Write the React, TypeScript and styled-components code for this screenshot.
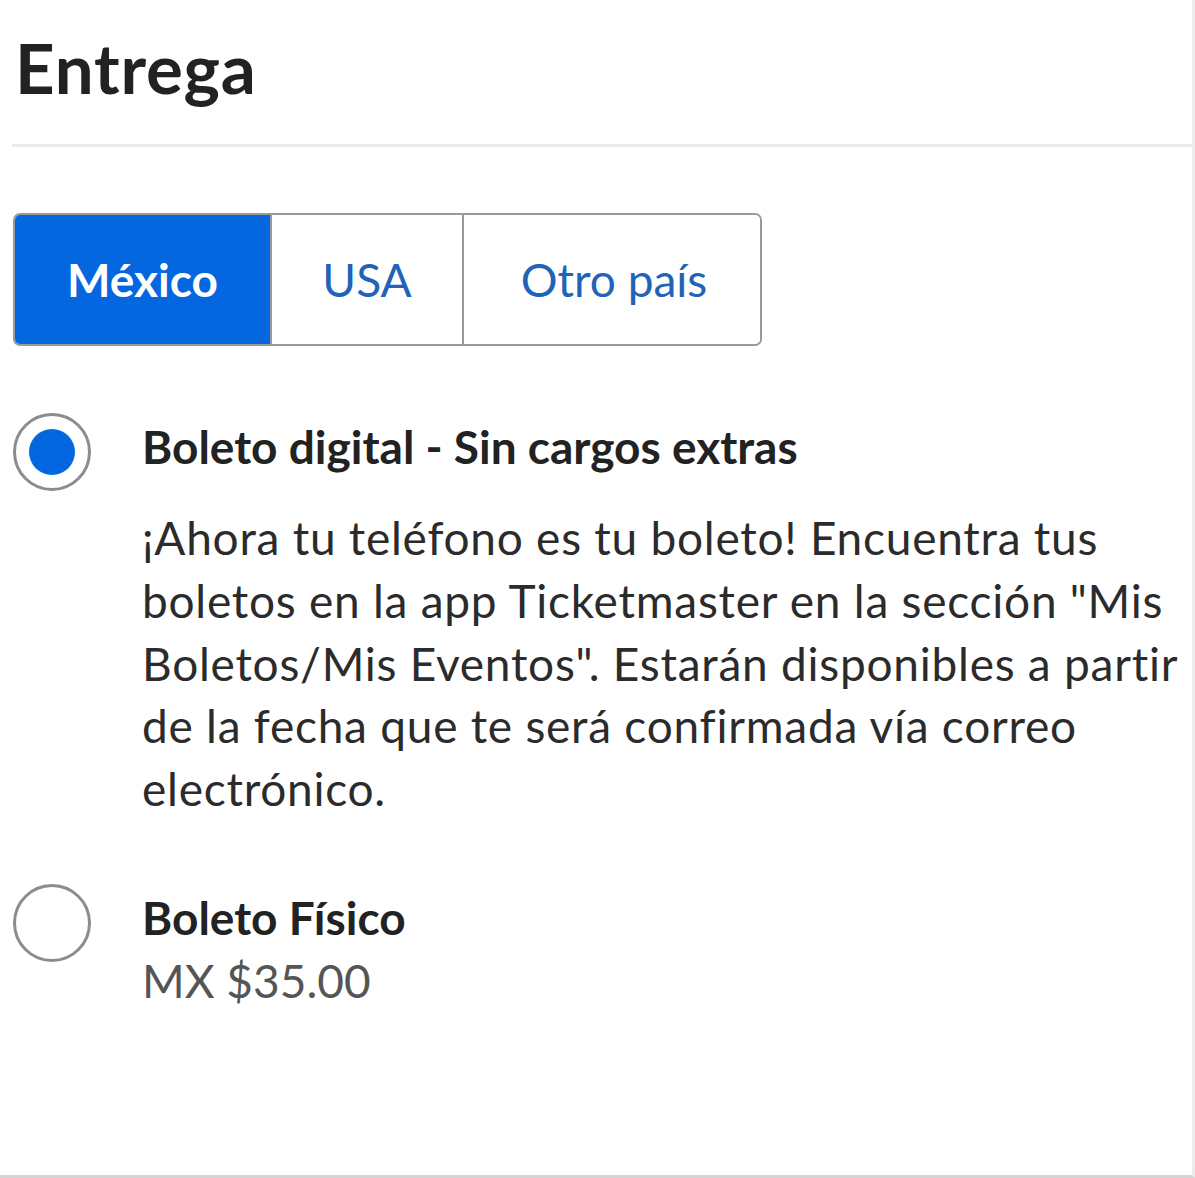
import styled, { createGlobalStyle } from "styled-components";

const GlobalStyle = createGlobalStyle`
  html, body {
    margin: 0;
    padding: 0;
    background: #ffffff;
  }
  body {
    font-family: Lato, "Noto Sans", "Liberation Sans", sans-serif;
    color: #262626;
  }
`;

const Page = styled.main`
  box-sizing: border-box;
  width: 1195px;
  height: 1178px;
  border-right: 3px solid #ececec;
  border-bottom: 3px solid #d4d4d4;
  overflow: hidden;
`;

const Header = styled.header`
  box-sizing: border-box;
  height: 147px;
  margin-left: 12px;
  padding: 27px 0 0 3px;
  border-bottom: 3px solid #ebebeb;
`;

const Title = styled.h1`
  margin: 0;
  font-size: 69px;
  font-weight: 700;
  letter-spacing: 0.8px;
  color: #222222;
  line-height: 1.2;
`;

const Body = styled.section`
  padding: 66px 0 0 13px;
`;

const Segments = styled.div`
  display: flex;
  width: 749px;
  height: 133px;
  box-sizing: border-box;
  border: 2px solid #9a9a9a;
  border-radius: 7px;
  overflow: hidden;
`;

const Segment = styled.button<{ $active?: boolean; $width: number }>`
  flex: 0 0 ${(p) => p.$width}px;
  display: flex;
  align-items: center;
  justify-content: center;
  border: none;
  border-left: ${(p) => (p.$active ? "none" : "2px solid #9a9a9a")};
  background: ${(p) => (p.$active ? "#0567e0" : "#ffffff")};
  color: ${(p) => (p.$active ? "#ffffff" : "#2163b8")};
  font-family: inherit;
  font-size: 46px;
  font-weight: ${(p) => (p.$active ? 700 : 400)};
  padding: 0;
  &:first-child {
    border-left: none;
  }
`;

const Options = styled.div`
  display: flex;
  flex-direction: column;
  gap: 62px;
  margin-top: 66px;
`;

const Option = styled.label`
  display: flex;
  align-items: flex-start;
  gap: 51px;
`;

const Radio = styled.span<{ $checked?: boolean }>`
  flex: 0 0 auto;
  position: relative;
  width: 78px;
  height: 78px;
  box-sizing: border-box;
  border-radius: 50%;
  border: 3px solid #8c8c8c;
  margin-top: 1px;
  &::after {
    content: "";
    display: ${(p) => (p.$checked ? "block" : "none")};
    position: absolute;
    left: 13px;
    top: 13px;
    width: 46px;
    height: 46px;
    border-radius: 50%;
    background: #0567e0;
  }
`;

const OptionText = styled.div`
  display: flex;
  flex-direction: column;
`;

const OptionTitle = styled.div`
  font-size: 46px;
  font-weight: 700;
  line-height: 63px;
  color: #222222;
  margin-top: 3px;
`;

const Description = styled.p`
  margin: 29px 0 0;
  font-size: 46px;
  letter-spacing: 0.75px;
  line-height: 62.8px;
  color: #2b2b2b;
  white-space: nowrap;
`;

const Price = styled.div`
  font-size: 46px;
  line-height: 63px;
  color: #555555;
`;

export default function App() {
  return (
    <>
      <GlobalStyle />
      <Page>
        <Header>
          <Title>Entrega</Title>
        </Header>
        <Body>
          <Segments>
            <Segment $active $width={255}>México</Segment>
            <Segment $width={192}>USA</Segment>
            <Segment $width={302}>Otro país</Segment>
          </Segments>
          <Options>
            <Option>
              <Radio $checked />
              <OptionText>
                <OptionTitle>Boleto digital - Sin cargos extras</OptionTitle>
                <Description>
                  ¡Ahora tu teléfono es tu boleto! Encuentra tus
                  <br />
                  boletos en la app Ticketmaster en la sección "Mis
                  <br />
                  Boletos/Mis Eventos". Estarán disponibles a partir
                  <br />
                  de la fecha que te será confirmada vía correo
                  <br />
                  electrónico.
                </Description>
              </OptionText>
            </Option>
            <Option>
              <Radio />
              <OptionText>
                <OptionTitle>Boleto Físico</OptionTitle>
                <Price>MX $35.00</Price>
              </OptionText>
            </Option>
          </Options>
        </Body>
      </Page>
    </>
  );
}
